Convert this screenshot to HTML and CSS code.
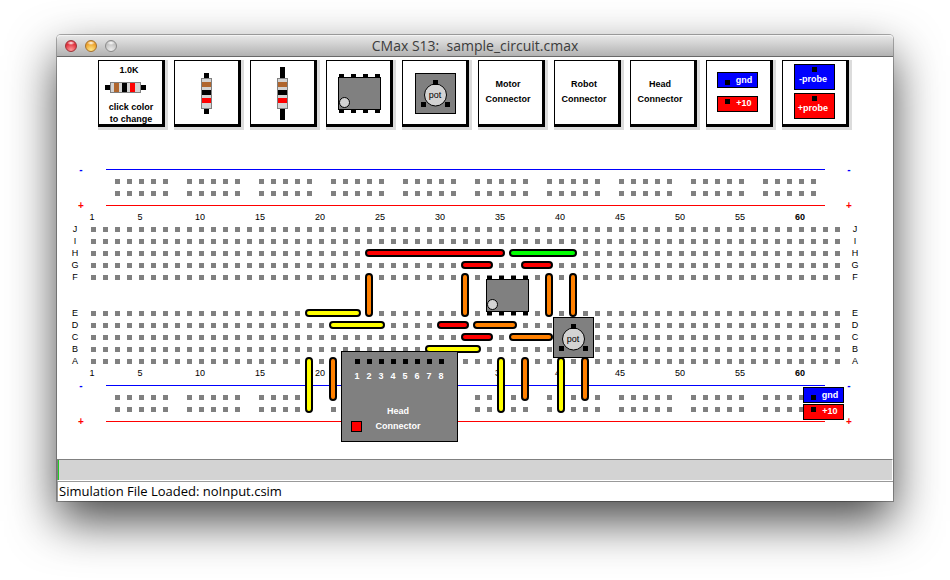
FILE: index.html
```html
<!DOCTYPE html>
<html lang="en">
<head>
<meta charset="utf-8">
<title>CMax S13: sample_circuit.cmax</title>
<link rel="stylesheet" href="styles.css">
</head>
<body>
<svg class="defs" aria-hidden="true">
  <defs>
    <pattern id="holes" x="91" y="227" width="12" height="12" patternUnits="userSpaceOnUse">
      <rect class="hole" width="5" height="5"/>
    </pattern>
    <pattern id="rail-holes" x="115" y="179" width="72" height="12" patternUnits="userSpaceOnUse">
      <path class="hole" d="M0 0h5v5h-5zM12 0h5v5h-5zM24 0h5v5h-5zM36 0h5v5h-5zM48 0h5v5h-5z"/>
    </pattern>
    <g id="chip">
      <path d="M1-3h5v4h-5zM13-3h5v4h-5zM25-3h5v4h-5zM37-3h5v4h-5zM1 32h5v4h-5zM13 32h5v4h-5zM25 32h5v4h-5zM37 32h5v4h-5z"/>
      <rect class="body" x=".5" y=".5" width="42" height="32"/>
      <circle class="knob" cx="6.5" cy="25.5" r="5"/>
    </g>
    <g id="pot">
      <rect class="body" x=".5" y=".5" width="40" height="40"/>
      <circle class="knob" cx="20.5" cy="22" r="11"/>
      <path d="M18 7h5v5h-5zM6 29h5v5h-5zM30 29h5v5h-5z"/>
      <text class="mid" x="20" y="25">pot</text>
    </g>
    <g id="resistor">
      <rect class="casing" x=".5" y=".5" width="10" height="30"/>
      <path class="brown" d="M1 4h9v5h-9z"/>
      <path d="M1 12h9v5h-9z"/>
      <path class="red" d="M1 20h9v5h-9z"/>
    </g>
  </defs>
</svg>

<div class="window">
  <header class="titlebar">
    <div class="lights">
      <button class="light close" aria-label="Close"></button>
      <button class="light minimize" aria-label="Minimize"></button>
      <button class="light zoom" aria-label="Zoom"></button>
    </div>
    <h1>CMax S13:&nbsp; sample_circuit.cmax</h1>
  </header>

  <main>
    <nav class="tray" aria-label="Parts">
      <button class="part"><svg viewBox="0 0 63 63">
        <path d="M6 24h5v5h-5zM42 24h5v5h-5z"/>
        <rect class="casing" x="11.5" y="21.5" width="30" height="10"/>
        <path class="brown" d="M15 22h5v9h-5z"/><path d="M23 22h5v9h-5z"/><path class="red" d="M31 22h5v9h-5z"/>
        <text class="mid bold" x="30" y="12">1.0K</text>
        <text class="mid bold" x="32" y="49">click color</text>
        <text class="mid bold" x="32" y="61">to change</text>
      </svg></button>
      <button class="part" aria-label="Short resistor"><svg viewBox="0 0 63 63">
        <path d="M29 12h5v41h-5z"/><use href="#resistor" x="26" y="17"/>
      </svg></button>
      <button class="part" aria-label="Long resistor"><svg viewBox="0 0 63 63">
        <path d="M29 6h5v53h-5z"/><use href="#resistor" x="26" y="17"/>
      </svg></button>
      <button class="part" aria-label="Op amp"><svg viewBox="0 0 63 63"><use href="#chip" x="11" y="16"/></svg></button>
      <button class="part"><svg viewBox="0 0 63 63"><use href="#pot" x="12" y="12"/></svg></button>
      <button class="part"><svg viewBox="0 0 63 63">
        <text class="mid bold" x="29" y="26">Motor</text><text class="mid bold" x="29" y="41">Connector</text>
      </svg></button>
      <button class="part"><svg viewBox="0 0 63 63">
        <text class="mid bold" x="29" y="26">Robot</text><text class="mid bold" x="29" y="41">Connector</text>
      </svg></button>
      <button class="part"><svg viewBox="0 0 63 63">
        <text class="mid bold" x="29" y="26">Head</text><text class="mid bold" x="29" y="41">Connector</text>
      </svg></button>
      <button class="part"><svg viewBox="0 0 63 63">
        <rect class="tag blue" x="10.5" y="11.5" width="40" height="15"/><path d="M18 19h5v5h-5z"/>
        <text class="mid bold light-text" x="37" y="22">gnd</text>
        <rect class="tag red" x="10.5" y="35.5" width="40" height="15"/><path d="M18 38h5v5h-5z"/>
        <text class="mid bold light-text" x="37" y="45">+10</text>
      </svg></button>
      <button class="part"><svg viewBox="0 0 63 63">
        <rect class="tag blue" x="11.5" y="3.5" width="40" height="25"/><path d="M29 6h5v5h-5z"/>
        <text class="mid bold light-text" x="30" y="21">-probe</text>
        <rect class="tag red" x="11.5" y="32.5" width="40" height="25"/><path d="M29 35h5v5h-5z"/>
        <text class="mid bold light-text" x="30" y="50">+probe</text>
      </svg></button>
    </nav>

    <svg class="board" viewBox="57 135 836 324" role="img" aria-label="Breadboard">
      <path class="rail-minus" d="M106 169.5H825M106 385.5H825"/>
      <path class="rail-plus" d="M106 205.5H825M106 421.5H825"/>
      <rect x="115" y="179" width="720" height="17" fill="url(#rail-holes)"/>
      <rect x="91" y="227" width="749" height="53" fill="url(#holes)"/>
      <rect x="91" y="311" width="749" height="53" fill="url(#holes)"/>
      <g transform="translate(0 216)"><rect x="115" y="179" width="720" height="17" fill="url(#rail-holes)"/></g>

      <g class="minus bold mid"><text class="sign" x="81" y="173">-</text><text class="sign" x="849" y="173">-</text><text class="sign" x="81" y="389">-</text><text class="sign" x="849" y="389">-</text></g>
      <g class="plus bold mid"><text class="sign" x="81" y="209">+</text><text class="sign" x="849" y="209">+</text><text class="sign" x="81" y="425">+</text><text class="sign" x="849" y="425">+</text></g>

      <g id="columns" class="mid">
        <text x="92" y="220">1</text><text x="140" y="220">5</text><text x="200" y="220">10</text><text x="260" y="220">15</text><text x="320" y="220">20</text><text x="380" y="220">25</text><text x="440" y="220">30</text><text x="500" y="220">35</text><text x="560" y="220">40</text><text x="620" y="220">45</text><text x="680" y="220">50</text><text x="740" y="220">55</text><text class="bold" x="800" y="220">60</text>
      </g>
      <use href="#columns" y="156"/>
      <g id="rows" class="mid">
        <text x="75" y="232">J</text><text x="75" y="244">I</text><text x="75" y="256">H</text><text x="75" y="268">G</text><text x="75" y="280">F</text><text x="75" y="316">E</text><text x="75" y="328">D</text><text x="75" y="340">C</text><text x="75" y="352">B</text><text x="75" y="364">A</text>
      </g>
      <use href="#rows" x="780"/>

      <g class="wires">
        <rect class="red" x="366" y="250" width="138" height="6" rx="3"/>
        <rect class="green" x="510" y="250" width="66" height="6" rx="3"/>
        <rect class="red" x="462" y="262" width="30" height="6" rx="3"/>
        <rect class="red" x="522" y="262" width="30" height="6" rx="3"/>
        <rect class="yellow" x="306" y="310" width="54" height="6" rx="3"/>
        <rect class="orange" x="366" y="274" width="6" height="42" rx="3"/>
        <rect class="orange" x="462" y="274" width="6" height="42" rx="3"/>
        <rect class="orange" x="546" y="274" width="6" height="42" rx="3"/>
        <rect class="orange" x="570" y="274" width="6" height="42" rx="3"/>
        <rect class="yellow" x="330" y="322" width="54" height="6" rx="3"/>
        <rect class="red" x="438" y="322" width="30" height="6" rx="3"/>
        <rect class="orange" x="474" y="322" width="42" height="6" rx="3"/>
        <rect class="red" x="462" y="334" width="30" height="6" rx="3"/>
        <rect class="orange" x="510" y="334" width="42" height="6" rx="3"/>
        <rect class="yellow" x="426" y="346" width="54" height="6" rx="3"/>
        <rect class="yellow" x="306" y="358" width="6" height="54" rx="3"/>
        <rect class="orange" x="330" y="358" width="6" height="42" rx="3"/>
        <rect class="yellow" x="498" y="358" width="6" height="54" rx="3"/>
        <rect class="orange" x="522" y="358" width="6" height="42" rx="3"/>
        <rect class="yellow" x="558" y="358" width="6" height="54" rx="3"/>
        <rect class="orange" x="582" y="358" width="6" height="42" rx="3"/>
      </g>

      <use href="#chip" x="486" y="279"/>
      <use href="#pot" x="553" y="317"/>

      <g>
        <rect class="body" x="341.5" y="351.5" width="116" height="90"/>
        <path d="M355 359h5v5h-5zM367 359h5v5h-5zM379 359h5v5h-5zM391 359h5v5h-5zM403 359h5v5h-5zM415 359h5v5h-5zM427 359h5v5h-5zM439 359h5v5h-5z"/>
        <g class="mid bold light-text">
          <text x="357" y="379">1</text><text x="369" y="379">2</text><text x="381" y="379">3</text><text x="393" y="379">4</text><text x="405" y="379">5</text><text x="417" y="379">6</text><text x="429" y="379">7</text><text x="441" y="379">8</text>
          <text x="398" y="414">Head</text><text x="398" y="429">Connector</text>
        </g>
        <rect class="tag red" x="351.5" y="421.5" width="10" height="10"/>
      </g>

      <g>
        <rect class="tag blue" x="803.5" y="387.5" width="40" height="15"/><path d="M811 395h5v5h-5z"/>
        <text class="mid bold light-text" x="830" y="398">gnd</text>
        <rect class="tag red" x="803.5" y="404.5" width="40" height="15"/><path d="M811 407h5v5h-5z"/>
        <text class="mid bold light-text" x="830" y="414">+10</text>
      </g>
    </svg>
  </main>

  <div class="timeline"></div>
  <footer class="status">Simulation File Loaded: noInput.csim</footer>
</div>
</body>
</html>
```
FILE: styles.css
```css
* {
  box-sizing: border-box;
}

body {
  margin: 0;
  padding: 35px 57px 78px;
  background: #fff;
  font-family: "Open Sans", "Noto Sans", sans-serif;
  overflow: hidden;
}

.defs {
  position: absolute;
  width: 0;
  height: 0;
}

.window {
  background: #fff;
  border-radius: 4px 4px 0 0;
  box-shadow:
    0 0 0 1px rgba(0, 0, 0, 0.3),
    0 20px 48px rgba(0, 0, 0, 0.72);
}

.titlebar {
  display: grid;
  grid-template-columns: 1fr auto 1fr;
  align-items: center;
  height: 22px;
  padding: 0 8px;
  border-bottom: 1px solid #686868;
  border-radius: 4px 4px 0 0;
  background: linear-gradient(#e9e9e9, #b2b2b2);
  box-shadow: inset 0 1px 0 #f4f4f4;
}

.titlebar h1 {
  margin: 0;
  color: #3c3c3c;
  font-size: 14px;
  font-weight: 400;
  line-height: 20px;
}

.lights {
  display: flex;
  gap: 8px;
}

.light {
  width: 12px;
  height: 12px;
  padding: 0;
  border: 1px solid #888;
  border-radius: 50%;
}

.close {
  border-color: #9c3438;
  background: radial-gradient(ellipse 4px 2px at 50% 20%, #fff, transparent), radial-gradient(circle at 50% 90%, #ff9a9a, #e0303c 65%);
}

.minimize {
  border-color: #a4702c;
  background: radial-gradient(ellipse 4px 2px at 50% 20%, #fff, transparent), radial-gradient(circle at 50% 90%, #ffe88a, #eda22c 65%);
}

.zoom {
  border-color: #8a8a8a;
  background: radial-gradient(ellipse 4px 2px at 50% 20%, #fff, transparent), radial-gradient(circle at 50% 90%, #ececec, #c2c2c2 65%);
}

.tray {
  display: flex;
  gap: 9px;
  padding: 3px 0 8px 41px;
}

.part {
  flex: none;
  width: 67px;
  height: 67px;
  padding: 0;
  border: solid #000;
  border-width: 1px 3px 3px 1px;
  background: #fff;
  box-shadow: 3px 0 #dcdcdc, 0 3px #dcdcdc, 3px 3px #dcdcdc;
}

.part svg,
.board {
  display: block;
  width: 100%;
}

text {
  font-family: "Liberation Sans", sans-serif;
  font-size: 9px;
}

.sign {
  font-size: 10px;
}

.mid {
  text-anchor: middle;
}

.bold {
  font-weight: 700;
}

.light-text {
  fill: #fff;
}

.hole,
.body {
  fill: #808080;
}

.body,
.tag,
.knob {
  stroke: #000;
}

.knob,
.casing {
  fill: #d3d3d3;
}

.casing {
  stroke: #808080;
}

.brown {
  fill: #b0662e;
}

.red {
  fill: #f00;
}

.blue {
  fill: #00f;
}

.green {
  fill: #0f0;
}

.yellow {
  fill: #ff0;
}

.orange {
  fill: #ff8000;
}

.rail-minus {
  stroke: #00f;
}

.rail-plus {
  stroke: #f00;
}

.minus {
  fill: #00f;
}

.plus {
  fill: #f00;
}

.wires {
  stroke: #000;
  stroke-width: 2;
}

.timeline {
  height: 22px;
  border-top: 1px solid #808080;
  border-left: 1px solid #808080;
  border-right: 1px solid #fff;
  border-bottom: 1px solid #fff;
  background: linear-gradient(90deg, #2c2 1px, #d3d3d3 1px);
}

.status {
  height: 20px;
  padding: 0 1px;
  border: solid #999;
  border-width: 1px 0 0 1px;
  color: #000;
  font-size: 13px;
  line-height: 18px;
}
```
